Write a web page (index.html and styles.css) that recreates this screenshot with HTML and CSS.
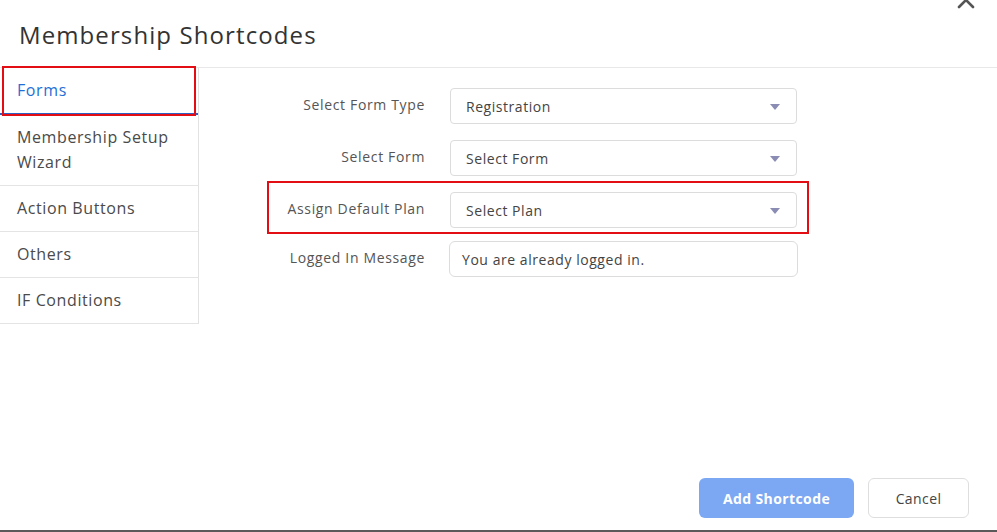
FILE: index.html
```html
<!DOCTYPE html>
<html>
<head>
<meta charset="utf-8">
<link rel="stylesheet" href="styles.css">
</head>
<body>
<div class="modal">
  <div class="header">
    <h1 class="title">Membership Shortcodes</h1>
    <span class="close">
      <svg width="20" height="20" viewBox="0 0 20 20"><path d="M3 3 L17 17 M17 3 L3 17" stroke="#555" stroke-width="2.6" stroke-linecap="round" fill="none"/></svg>
    </span>
  </div>
  <div class="content">
    <ul class="sidebar">
      <li class="tab active">Forms<span class="mark mark-tab"></span></li>
      <li class="tab">Membership Setup Wizard</li>
      <li class="tab">Action Buttons</li>
      <li class="tab">Others</li>
      <li class="tab">IF Conditions</li>
    </ul>
    <div class="main">
      <div class="row">
        <label class="label">Select Form Type</label>
        <div class="select">Registration<span class="caret"></span></div>
      </div>
      <div class="row">
        <label class="label">Select Form</label>
        <div class="select">Select Form<span class="caret"></span></div>
      </div>
      <div class="row">
        <label class="label">Assign Default Plan</label>
        <div class="select">Select Plan<span class="caret"></span></div>
        <span class="mark mark-row"></span>
      </div>
      <div class="row row-last">
        <label class="label">Logged In Message</label>
        <div class="input">You are already logged in.</div>
      </div>
    </div>
  </div>
  <div class="footer">
    <button class="btn btn-primary">Add Shortcode</button>
    <button class="btn btn-default">Cancel</button>
  </div>
</div>
</body>
</html>
```
FILE: styles.css
```css
* { box-sizing: border-box; }
html, body { margin: 0; padding: 0; }
body {
  width: 997px;
  height: 532px;
  overflow: hidden;
  background: #fff;
  font-family: "Open Sans", "Noto Sans", sans-serif;
  color: #444;
}
.modal {
  height: 532px;
  display: flex;
  flex-direction: column;
  border-bottom: 2px solid #5a5a5a;
}
.header {
  position: relative;
  height: 68px;
  border-bottom: 1px solid #e8e8e8;
  padding: 18px 0 0 19px;
}
.title {
  margin: 0;
  font-size: 24px;
  font-weight: 400;
  color: #333;
  letter-spacing: 1.1px;
  line-height: 34px;
}
.close {
  position: absolute;
  right: 21px;
  top: -10px;
  width: 20px;
  height: 20px;
}
.content {
  flex: 1;
  display: flex;
  align-items: flex-start;
}
.sidebar {
  list-style: none;
  margin: 0;
  padding: 0;
  width: 199px;
  border-right: 1px solid #e2e2e2;
}
.tab {
  position: relative;
  padding: 10px 17px 10px 17px;
  font-size: 16px;
  line-height: 25px;
  color: #4a4a4a;
  letter-spacing: 0.6px;
  border-bottom: 1px solid #e4e4e4;
}
.tab.active {
  color: #1f6fd6;
  border-bottom: 2px solid #2f5fc0;
  padding-top: 10px;
  padding-bottom: 10px;
}
.mark {
  position: absolute;
  border: 2px solid #e30d14;
  pointer-events: none;
}
.mark-tab {
  left: 2px;
  top: -2px;
  width: 194px;
  height: 50px;
}
.main {
  flex: 1;
  padding-top: 20px;
}
.row {
  position: relative;
  display: flex;
  align-items: center;
  margin-bottom: 16px;
}
.row-last { margin-top: -3px; }
.label {
  width: 226px;
  text-align: right;
  font-size: 14px;
  color: #555;
  letter-spacing: 0.65px;
  padding-bottom: 4px;
}
.select, .input {
  position: relative;
  margin-left: 25px;
  width: 347px;
  height: 36px;
  border: 1px solid #dcdcdc;
  border-radius: 4px;
  font-size: 14px;
  color: #444;
  letter-spacing: 0.55px;
  display: flex;
  align-items: center;
  padding-left: 15px;
}
.input {
  margin-left: 24px;
  width: 349px;
  border-radius: 6px;
  padding-left: 12px;
}
.caret {
  position: absolute;
  right: 16px;
  top: 15px;
  width: 0;
  height: 0;
  border-left: 5px solid transparent;
  border-right: 5px solid transparent;
  border-top: 6px solid #8a8cb3;
}
.mark-row {
  left: 68px;
  top: -11px;
  width: 542px;
  height: 53px;
}
.footer {
  display: flex;
  justify-content: flex-end;
  gap: 14px;
  padding: 0 28px 12px 0;
}
.btn {
  height: 40px;
  border-radius: 6px;
  font-family: inherit;
  font-size: 14px;
  letter-spacing: 0.4px;
  cursor: pointer;
}
.btn-primary {
  width: 155px;
  background: #7ba7f3;
  border: none;
  color: #fff;
  font-weight: 700;
}
.btn-default {
  width: 101px;
  background: #fff;
  border: 1px solid #dedede;
  color: #444;
}
```
